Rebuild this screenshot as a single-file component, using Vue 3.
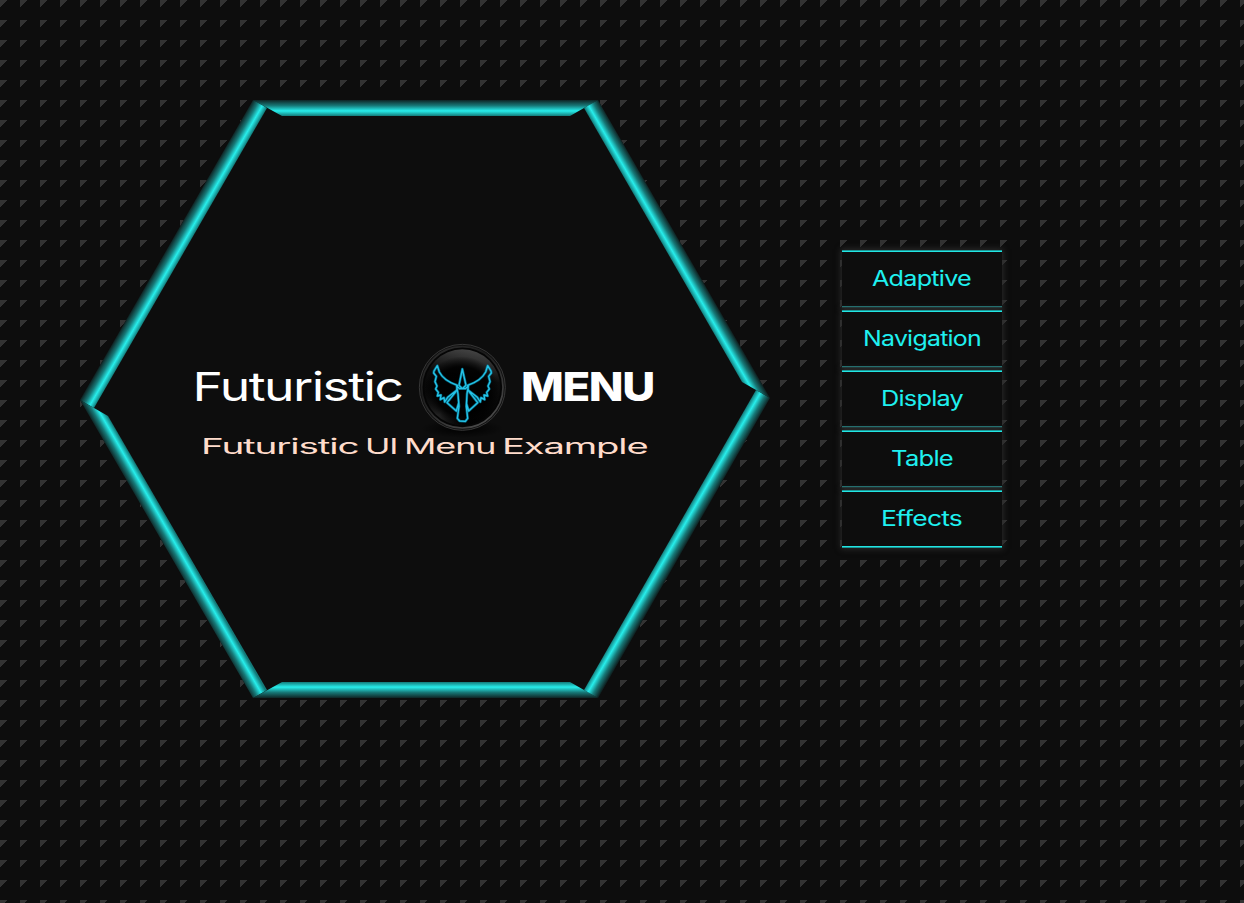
<script setup>
const subtitle = [
  { text: 'Futuristic', width: 155 },
  { text: 'UI', width: 30 },
  { text: 'Menu', width: 89 },
  { text: 'Example', width: 143 }
]
const items = [
  { text: 'Adaptive', width: 98 },
  { text: 'Navigation', width: 117 },
  { text: 'Display', width: 81 },
  { text: 'Table', width: 61 },
  { text: 'Effects', width: 80 }
]
// Each bar runs along one side; x1..y2 is the gradient axis from outside to inside.
const bars = [
  { id: 'top', points: '173,0 518,0 490,16 202,16', x1: 0, y1: 0, x2: 0, y2: 16 },
  { id: 'upperLeft', points: '173,0 187,8 14,308 0,300', x1: 173, y1: 0, x2: 186.9, y2: 8 },
  { id: 'lowerLeft', points: '0,300 28,316 187,590 173,598', x1: 0, y1: 300, x2: 13.9, y2: 292 },
  { id: 'bottom', points: '173,598 202,582 490,582 518,598', x1: 0, y1: 598, x2: 0, y2: 582 },
  { id: 'lowerRight', points: '690,298 676,290 504,590 518,598', x1: 690, y1: 298, x2: 676.1, y2: 290 },
  { id: 'upperRight', points: '518,0 504,8 662,282 690,298', x1: 518, y1: 0, x2: 504.1, y2: 8 }
]
</script>

<template>
  <main class="page">
    <section class="hexagon">
      <svg class="frame" width="690" height="598" viewBox="0 0 690 598">
        <defs>
          <linearGradient
            v-for="b in bars" :id="b.id" :key="b.id" gradientUnits="userSpaceOnUse"
            :x1="b.x1" :y1="b.y1" :x2="b.x2" :y2="b.y2"
          >
            <stop offset="0" stop-color="#0f2424" />
            <stop offset=".35" stop-color="#177877" />
            <stop offset=".68" stop-color="#27eeec" />
            <stop offset="1" stop-color="#137a79" />
          </linearGradient>
        </defs>
        <polygon points="173,0 518,0 690,298 518,598 173,598 0,300" fill="#0d0d0d" />
        <polygon v-for="b in bars" :key="b.id" :points="b.points" :fill="`url(#${b.id})`" />
      </svg>
      <header class="heading">
        <h1 class="title">
          <svg class="word light" width="207" height="46">
            <text x="-2.5" y="34" textLength="210" lengthAdjust="spacingAndGlyphs">Futuristic</text>
          </svg>
          <svg class="emblem" width="115" height="110" viewBox="0 0 345 330">
            <defs>
              <radialGradient id="shade" cx=".5" cy=".5" r=".5">
                <stop offset="0" stop-color="#000" />
                <stop offset="1" stop-color="#000" stop-opacity="0" />
              </radialGradient>
              <linearGradient id="rim" x1="0" y1="0" x2=".7" y2="1">
                <stop offset="0" stop-color="#333" />
                <stop offset=".4" stop-color="#1b1b1b" />
                <stop offset="1" stop-color="#4a4a4a" />
              </linearGradient>
              <linearGradient id="gloss" x1=".6" y1="0" x2=".4" y2="1">
                <stop offset="0" stop-color="#444" />
                <stop offset=".35" stop-color="#0c0c0c" />
                <stop offset="1" stop-color="#000" />
              </linearGradient>
              <radialGradient id="lower" cx=".2" cy=".85" r=".5">
                <stop offset="0" stop-color="#2c2c2c" />
                <stop offset="1" stop-color="#000" stop-opacity="0" />
              </radialGradient>
              <radialGradient id="core" cx=".5" cy=".5" r=".5">
                <stop offset=".7" stop-color="#000" stop-opacity=".9" />
                <stop offset="1" stop-color="#000" stop-opacity="0" />
              </radialGradient>
            </defs>
            <ellipse cx="172" cy="281" rx="125" ry="28" fill="url(#shade)" />
            <circle cx="172" cy="157" r="129" fill="#111" stroke="#373737" stroke-width="3" />
            <circle cx="172" cy="157" r="122" fill="#050505" stroke="url(#rim)" stroke-width="5" />
            <circle cx="172" cy="157" r="114" fill="url(#gloss)" />
            <circle cx="172" cy="157" r="114" fill="url(#lower)" />
            <ellipse cx="170" cy="168" rx="112" ry="104" fill="url(#core)" />
            <g fill="none" stroke-linejoin="round">
              <path
                v-for="layer in ['halo', 'line']" :key="layer" :class="layer"
                d="M172 102L162 151L172 161L183 151ZM97 92L87 108L86 114L94 124L90 140L96 153L92 162L100 172L97 183L108 180L106 194L117 188L119 201L128 187L155 166L157 151Q116 137 103 111ZM248 92L258 108L259 114L251 124L255 140L249 153L253 162L245 172L248 183L237 180L239 194L228 188L226 201L217 187L190 166L188 151Q229 137 242 111ZM155 153L164 161H181L190 153L186 177L184 214L188 250L181 259L164 258L157 250L162 214L159 177ZM155 167L126 203L154 228L161 204M190 167L218 203L191 228L184 204"
              />
            </g>
          </svg>
          <svg class="word bold" width="132" height="46">
            <text x="-2" y="34" textLength="133" lengthAdjust="spacingAndGlyphs">MENU</text>
          </svg>
        </h1>
        <p class="subtitle">
          <svg v-for="w in subtitle" :key="w.text" class="word" :width="w.width" height="22">
            <text x="-2" y="17" :textLength="w.width + 2.5" lengthAdjust="spacingAndGlyphs">{{ w.text }}</text>
          </svg>
        </p>
      </header>
    </section>
    <nav class="menu">
      <a v-for="i in items" :key="i.text" class="item">
        <svg class="word" :width="i.width" height="28">
          <text x="-1" y="20" :textLength="i.width + 1" lengthAdjust="spacingAndGlyphs">{{ i.text }}</text>
        </svg>
      </a>
    </nav>
  </main>
</template>

<style>
body { background: #0d0d0d; }
</style>

<style scoped>
.page {
  box-sizing: border-box;
  width: 1244px;
  height: 903px;
  padding: 100px 80px;
  display: flex;
  align-items: flex-start;
  gap: 72px;
  overflow: hidden;
  background: linear-gradient(135deg, #333 5.2px, transparent 5.2px) 0 0 / 20px 20px #0d0d0d;
  font-family: Inter, "DejaVu Sans", sans-serif;
}
.hexagon { position: relative; flex: none; width: 690px; height: 598px; }
.frame { position: absolute; inset: 0; }
.heading { position: relative; padding-top: 235px; }
.title {
  display: flex;
  align-items: center;
  gap: 3px;
  height: 110px;
  margin: 0 0 0 115px;
}
.word { display: block; flex: none; overflow: visible; fill: currentColor; letter-spacing: -.03em; }
.light, .bold { margin-top: -1px; color: #fff; font-size: 40px; }
.light { font-weight: 400; }
.bold { font-weight: 800; }
.emblem { flex: none; }
.halo { stroke: #087d9d; stroke-width: 8; opacity: .75; }
.line { stroke: #25c5e9; stroke-width: 4; }
.subtitle {
  display: flex;
  gap: 9px;
  margin: -8px 0 0 123px;
  color: #ffdccb;
  font-size: 21px;
  font-weight: 400;
}
.menu { display: grid; grid-auto-rows: 58px; gap: 2px; width: 160px; margin-top: 150px; }
.item {
  box-sizing: border-box;
  position: relative;
  display: flex;
  justify-content: center;
  padding-top: 16px;
  color: #1ff0f0;
  font-size: 21px;
  background:
    linear-gradient(#1a9695 1px, #22e5e3 1px 2px, transparent 2px) top / 100% 3px no-repeat,
    linear-gradient(#22e5e3 1px, #1a9695 1px) bottom / 100% 2px no-repeat,
    #0d0d0d;
  box-shadow: 0 0 6px 1px #2c2c2c;
}
.item:not(:last-child) {
  background:
    linear-gradient(#1a9695 1px, #22e5e3 1px 2px, transparent 2px) top / 100% 3px no-repeat,
    linear-gradient(#248080 1px, #203c3c 1px) bottom / 100% 2px no-repeat,
    #0d0d0d;
}
</style>
